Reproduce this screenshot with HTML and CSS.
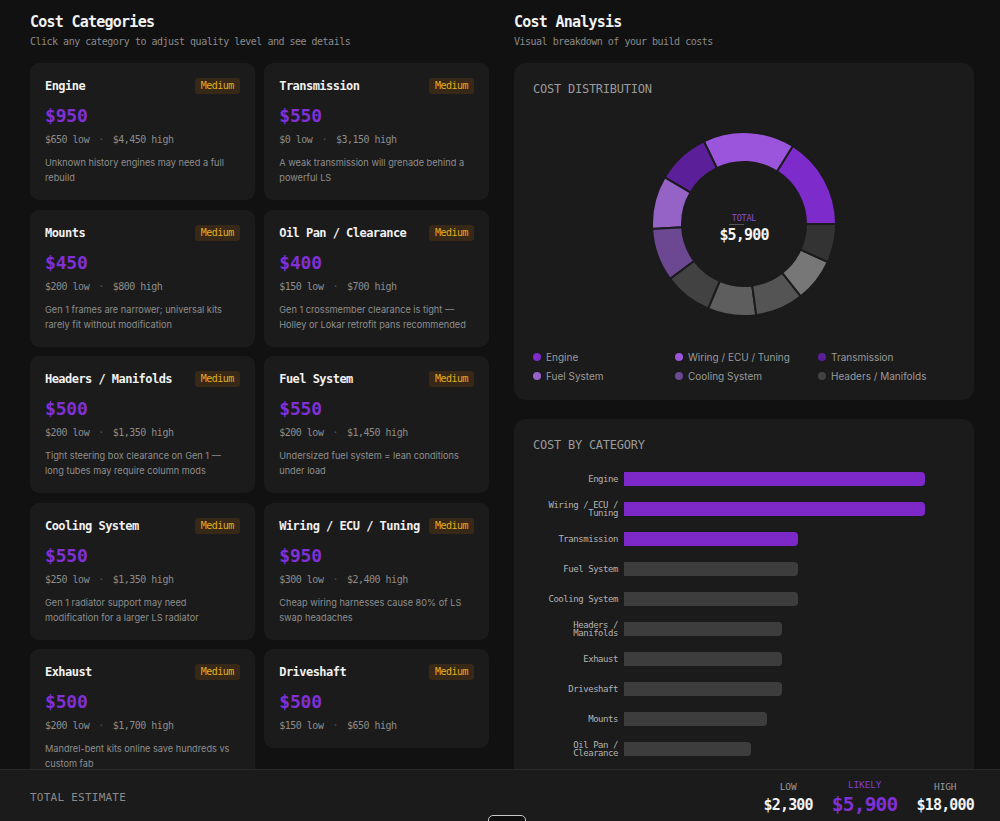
FILE: index.html
```html
<!DOCTYPE html>
<html lang="en">
<head>
    <meta charset="UTF-8">
    <meta name="viewport" content="width=device-width, initial-scale=1.0">
    <title>Cost Breakdown</title>
    <link rel="stylesheet" href="styles.css">
</head>
<body>
    <div class="page">
        <!-- left: category cards -->
        <section>
            <h2 class="section-title">Cost Categories</h2>
            <p class="section-sub">Click any category to adjust quality level and see details</p>
            <div class="cards">
                <div class="card">
                    <div class="card-head"><span class="card-name">Engine</span><span class="badge">Medium</span></div>
                    <div class="price">$950</div>
                    <div class="range">$650 low<span class="sep">&middot;</span>$4,450 high</div>
                    <p class="desc">Unknown history engines may need a full rebuild</p>
                </div>
                <div class="card">
                    <div class="card-head"><span class="card-name">Transmission</span><span class="badge">Medium</span></div>
                    <div class="price">$550</div>
                    <div class="range">$0 low<span class="sep">&middot;</span>$3,150 high</div>
                    <p class="desc">A weak transmission will grenade behind a powerful LS</p>
                </div>
                <div class="card">
                    <div class="card-head"><span class="card-name">Mounts</span><span class="badge">Medium</span></div>
                    <div class="price">$450</div>
                    <div class="range">$200 low<span class="sep">&middot;</span>$800 high</div>
                    <p class="desc">Gen 1 frames are narrower; universal kits rarely fit without modification</p>
                </div>
                <div class="card">
                    <div class="card-head"><span class="card-name">Oil Pan / Clearance</span><span class="badge">Medium</span></div>
                    <div class="price">$400</div>
                    <div class="range">$150 low<span class="sep">&middot;</span>$700 high</div>
                    <p class="desc">Gen 1 crossmember clearance is tight &mdash; Holley or Lokar retrofit pans recommended</p>
                </div>
                <div class="card">
                    <div class="card-head"><span class="card-name">Headers / Manifolds</span><span class="badge">Medium</span></div>
                    <div class="price">$500</div>
                    <div class="range">$200 low<span class="sep">&middot;</span>$1,350 high</div>
                    <p class="desc">Tight steering box clearance on Gen 1 &mdash; long tubes may require column mods</p>
                </div>
                <div class="card">
                    <div class="card-head"><span class="card-name">Fuel System</span><span class="badge">Medium</span></div>
                    <div class="price">$550</div>
                    <div class="range">$200 low<span class="sep">&middot;</span>$1,450 high</div>
                    <p class="desc">Undersized fuel system = lean conditions under load</p>
                </div>
                <div class="card">
                    <div class="card-head"><span class="card-name">Cooling System</span><span class="badge">Medium</span></div>
                    <div class="price">$550</div>
                    <div class="range">$250 low<span class="sep">&middot;</span>$1,350 high</div>
                    <p class="desc">Gen 1 radiator support may need modification for a larger LS radiator</p>
                </div>
                <div class="card">
                    <div class="card-head"><span class="card-name">Wiring / ECU / Tuning</span><span class="badge">Medium</span></div>
                    <div class="price">$950</div>
                    <div class="range">$300 low<span class="sep">&middot;</span>$2,400 high</div>
                    <p class="desc">Cheap wiring harnesses cause 80% of LS swap headaches</p>
                </div>
                <div class="card">
                    <div class="card-head"><span class="card-name">Exhaust</span><span class="badge">Medium</span></div>
                    <div class="price">$500</div>
                    <div class="range">$200 low<span class="sep">&middot;</span>$1,700 high</div>
                    <p class="desc">Mandrel-bent kits online save hundreds vs custom fab</p>
                </div>
                <div class="card">
                    <div class="card-head"><span class="card-name">Driveshaft</span><span class="badge">Medium</span></div>
                    <div class="price">$500</div>
                    <div class="range">$150 low<span class="sep">&middot;</span>$650 high</div>
                </div>
            </div>
        </section>

        <!-- right: charts -->
        <section>
            <h2 class="section-title">Cost Analysis</h2>
            <p class="section-sub">Visual breakdown of your build costs</p>
            <div class="panels">
                <div class="panel">
                    <div class="panel-title">COST DISTRIBUTION</div>
                    <div class="donut">
                        <div class="donut-wrap">
                            <svg width="186" height="186" viewBox="-1 -1 186 186">
                                <g stroke="#1b1b1b" stroke-width="2">
                                    <path fill="#7e2bcc" d="M184 92 A92 92 0 0 0 140.80 14.01 L124.88 39.44 A62 62 0 0 1 154 92 Z"/>
                                    <path fill="#9b55dc" d="M140.80 14.01 A92 92 0 0 0 51.77 9.26 L64.89 36.24 A62 62 0 0 1 124.88 39.44 Z"/>
                                    <path fill="#5c1f9a" d="M51.77 9.26 A92 92 0 0 0 12.73 45.30 L38.58 60.53 A62 62 0 0 1 64.89 36.24 Z"/>
                                    <path fill="#9562c5" d="M12.73 45.30 A92 92 0 0 0 0.13 96.89 L30.09 95.30 A62 62 0 0 1 38.58 60.53 Z"/>
                                    <path fill="#6c4892" d="M0.13 96.89 A92 92 0 0 0 18.15 146.87 L42.23 128.98 A62 62 0 0 1 30.09 95.30 Z"/>
                                    <path fill="#424242" d="M18.15 146.87 A92 92 0 0 0 56.23 176.76 L67.89 149.12 A62 62 0 0 1 42.23 128.98 Z"/>
                                    <path fill="#5e5e5e" d="M56.23 176.76 A92 92 0 0 0 104.22 183.19 L100.23 153.45 A62 62 0 0 1 67.89 149.12 Z"/>
                                    <path fill="#545454" d="M104.22 183.19 A92 92 0 0 0 148.82 164.36 L130.29 140.76 A62 62 0 0 1 100.23 153.45 Z"/>
                                    <path fill="#777777" d="M148.82 164.36 A92 92 0 0 0 175.78 130.01 L148.46 117.62 A62 62 0 0 1 130.29 140.76 Z"/>
                                    <path fill="#333333" d="M175.78 130.01 A92 92 0 0 0 184 92 L154 92 A62 62 0 0 1 148.46 117.62 Z"/>
                                </g>
                            </svg>
                            <div class="donut-center">
                                <span class="donut-label">TOTAL</span>
                                <span class="donut-value">$5,900</span>
                            </div>
                        </div>
                    </div>
                    <div class="legend">
                        <div class="legend-item"><span class="swatch" style="background:#7e2bcc"></span>Engine</div>
                        <div class="legend-item"><span class="swatch" style="background:#9b55dc"></span>Wiring / ECU / Tuning</div>
                        <div class="legend-item"><span class="swatch" style="background:#5c1f9a"></span>Transmission</div>
                        <div class="legend-item"><span class="swatch" style="background:#9562c5"></span>Fuel System</div>
                        <div class="legend-item"><span class="swatch" style="background:#6c4892"></span>Cooling System</div>
                        <div class="legend-item"><span class="swatch" style="background:#424242"></span>Headers / Manifolds</div>
                    </div>
                </div>

                <div class="panel">
                    <div class="panel-title">COST BY CATEGORY</div>
                    <div class="bars">
                        <div class="bar-row"><span class="bar-label">Engine</span><div class="bar-track"><div class="bar hot" style="width:90.9%"></div></div></div>
                        <div class="bar-row"><span class="bar-label">Wiring / ECU / Tuning</span><div class="bar-track"><div class="bar hot" style="width:90.9%"></div></div></div>
                        <div class="bar-row"><span class="bar-label">Transmission</span><div class="bar-track"><div class="bar hot" style="width:52.6%"></div></div></div>
                        <div class="bar-row"><span class="bar-label">Fuel System</span><div class="bar-track"><div class="bar" style="width:52.6%"></div></div></div>
                        <div class="bar-row"><span class="bar-label">Cooling System</span><div class="bar-track"><div class="bar" style="width:52.6%"></div></div></div>
                        <div class="bar-row"><span class="bar-label">Headers / Manifolds</span><div class="bar-track"><div class="bar" style="width:47.85%"></div></div></div>
                        <div class="bar-row"><span class="bar-label">Exhaust</span><div class="bar-track"><div class="bar" style="width:47.85%"></div></div></div>
                        <div class="bar-row"><span class="bar-label">Driveshaft</span><div class="bar-track"><div class="bar" style="width:47.85%"></div></div></div>
                        <div class="bar-row"><span class="bar-label">Mounts</span><div class="bar-track"><div class="bar" style="width:43.07%"></div></div></div>
                        <div class="bar-row"><span class="bar-label">Oil Pan / Clearance</span><div class="bar-track"><div class="bar" style="width:38.28%"></div></div></div>
                    </div>
                </div>
            </div>
        </section>
    </div>

    <footer class="totals">
        <span class="totals-title">TOTAL ESTIMATE</span>
        <div class="stats">
            <div class="stat"><span class="stat-label">LOW</span><span class="stat-value">$2,300</span></div>
            <div class="stat likely"><span class="stat-label">LIKELY</span><span class="stat-value">$5,900</span></div>
            <div class="stat"><span class="stat-label">HIGH</span><span class="stat-value">$18,000</span></div>
        </div>
    </footer>
    <div class="peek"></div>
</body>
</html>
```

FILE: styles.css
```css
body {
    margin: 0;
    background-color: #111111;
    color: #eeeeee;
    font-family: "DejaVu Sans Mono", "Liberation Mono", monospace;
}
.page {
    display: grid;
    grid-template-columns: 459px 460px;
    column-gap: 25px;
    padding: 12px 0 80px 30px;
}
.section-title {
    margin: 0;
    font-size: 15px;
    line-height: 20px;
    font-weight: bold;
    letter-spacing: -0.05em;
    color: #f2f2f2;
}
.section-sub {
    margin: 3px 0 0;
    font-size: 10px;
    line-height: 14px;
    letter-spacing: -0.05em;
    color: #8a8a8a;
}

/* category cards */
.cards {
    margin-top: 14px;
    display: grid;
    grid-template-columns: 1fr 1fr;
    gap: 9.5px;
    align-items: start;
}
.card {
    background-color: #1b1b1b;
    border-radius: 9px;
    padding: 15px;
}
.card-head {
    display: flex;
    justify-content: space-between;
    align-items: center;
    height: 16px;
}
.card-name {
    font-size: 12px;
    font-weight: bold;
    letter-spacing: -0.045em;
    color: #f0f0f0;
}
.badge {
    height: 16px;
    line-height: 16px;
    padding: 0 6px;
    border-radius: 3px;
    background-color: #382818;
    color: #e3ae1c;
    font-size: 10px;
    letter-spacing: -0.05em;
}
.price {
    margin-top: 10px;
    font-size: 18px;
    line-height: 24px;
    font-weight: bold;
    letter-spacing: -0.01em;
    color: #8030d4;
}
.range {
    margin-top: 5px;
    font-size: 10px;
    line-height: 14px;
    letter-spacing: -0.05em;
    color: #8c8c8c;
}
.range .sep {
    margin: 0 9px;
    color: #555555;
}
.desc {
    margin: 8px 0 0;
    max-width: 192px;
    font-family: Inter, "Noto Sans", sans-serif;
    font-size: 9.2px;
    line-height: 15px;
    color: #8e8e8e;
}

/* chart panels */
.panels {
    margin-top: 14px;
    display: flex;
    flex-direction: column;
    gap: 19px;
}
.panel {
    background-color: #1b1b1b;
    border-radius: 12px;
    padding: 19px 19px 17px;
}
.panel-title {
    font-size: 12px;
    line-height: 14px;
    letter-spacing: -0.02em;
    color: #9a9a9a;
}
.donut {
    display: flex;
    justify-content: center;
    padding: 35px 0 33px;
}
.donut-wrap {
    position: relative;
    width: 186px;
    height: 186px;
}
.donut-wrap svg {
    display: block;
}
.donut-center {
    position: absolute;
    inset: 0;
    padding-top: 9px;
    display: flex;
    flex-direction: column;
    align-items: center;
    justify-content: center;
    gap: 3px;
}
.donut-label {
    position: relative;
    font-size: 8.5px;
    line-height: 10px;
    letter-spacing: -0.03em;
    color: #8a50d0;
}
.donut-label::after {
    content: "";
    position: absolute;
    left: -3px;
    bottom: -2px;
    width: 15px;
    height: 1.5px;
    background-color: #555555;
}
.donut-value {
    font-size: 15px;
    line-height: 18px;
    font-weight: bold;
    letter-spacing: -0.055em;
    color: #f4f4f4;
}
.legend {
    display: grid;
    grid-template-columns: 142px 143px 1fr;
    row-gap: 5px;
    font-family: Inter, "Noto Sans", sans-serif;
    font-size: 10px;
    line-height: 14px;
    color: #9a9a9a;
}
.legend-item {
    display: flex;
    align-items: center;
    gap: 5px;
}
.swatch {
    width: 8px;
    height: 8px;
    border-radius: 50%;
}
.bars {
    margin-top: 12px;
    padding-bottom: 30px;
}
.bar-row {
    display: grid;
    grid-template-columns: 85px 1fr;
    column-gap: 6px;
    align-items: center;
    height: 30px;
}
.bar-label {
    text-align: right;
    font-size: 9px;
    line-height: 8.5px;
    letter-spacing: -0.05em;
    color: #b3b3b3;
}
.bar-track {
    height: 14px;
}
.bar {
    height: 14px;
    border-radius: 0 4px 4px 0;
    background-color: #3d3d3d;
}
.bar.hot {
    background-color: #7d28c9;
}

/* sticky total bar */
.totals {
    position: fixed;
    left: 0;
    right: 0;
    bottom: 0;
    height: 52px;
    box-sizing: border-box;
    display: flex;
    justify-content: space-between;
    align-items: center;
    padding: 3px 26px 0 30px;
    background-color: #1b1b1b;
    border-top: 1px solid #2a2a2a;
}
.totals-title {
    font-size: 11px;
    letter-spacing: 0.022em;
    color: #8a8a8a;
}
.stats {
    display: flex;
    align-items: center;
    gap: 19px;
}
.stat {
    display: flex;
    flex-direction: column;
    align-items: center;
}
.stat-label {
    margin-bottom: 3px;
    font-size: 9.5px;
    line-height: 12px;
    letter-spacing: -0.015em;
    color: #999999;
}
.stat-value {
    font-size: 15px;
    line-height: 18px;
    font-weight: bold;
    letter-spacing: -0.055em;
    color: #f2f2f2;
}
.stat.likely .stat-label {
    color: #7f3fd0;
}
.stat.likely .stat-value {
    font-size: 19.5px;
    line-height: 22px;
    letter-spacing: -0.04em;
    color: #8030d4;
}
.peek {
    position: fixed;
    left: 488px;
    top: 815px;
    width: 36px;
    height: 14px;
    border: 1px solid #c8c8c8;
    border-radius: 5px;
    background-color: #0e0e0e;
}
```
